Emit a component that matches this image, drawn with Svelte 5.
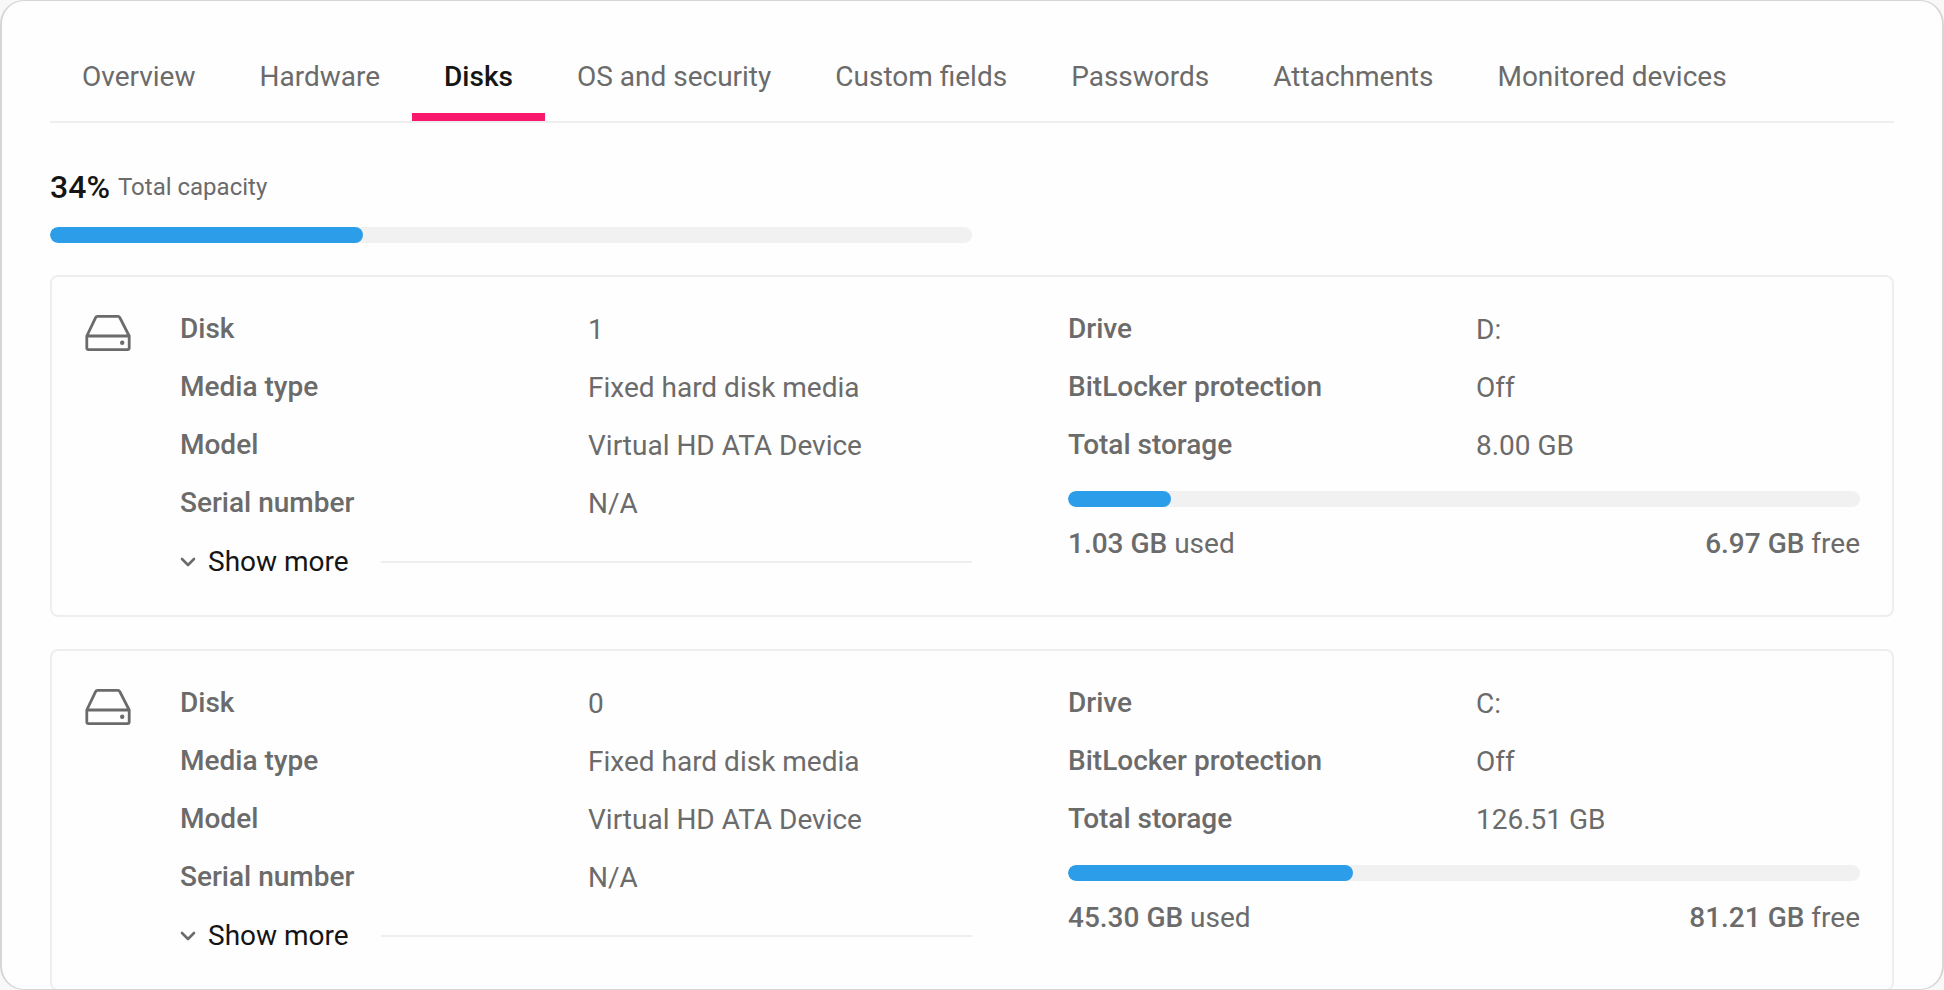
<script>
    let tabs = ['Overview', 'Hardware', 'Disks', 'OS and security', 'Custom fields', 'Passwords', 'Attachments', 'Monitored devices'];
    let activeTab = $state('Disks');

    let totalUsed = 34;

    let disks = [
        {
            left: [
                ['Disk', '1'],
                ['Media type', 'Fixed hard disk media'],
                ['Model', 'Virtual HD ATA Device'],
                ['Serial number', 'N/A']
            ],
            right: [
                ['Drive', 'D:'],
                ['BitLocker protection', 'Off'],
                ['Total storage', '8.00 GB']
            ],
            used: '1.03 GB',
            free: '6.97 GB',
            percent: 13
        },
        {
            left: [
                ['Disk', '0'],
                ['Media type', 'Fixed hard disk media'],
                ['Model', 'Virtual HD ATA Device'],
                ['Serial number', 'N/A']
            ],
            right: [
                ['Drive', 'C:'],
                ['BitLocker protection', 'Off'],
                ['Total storage', '126.51 GB']
            ],
            used: '45.30 GB',
            free: '81.21 GB',
            percent: 36
        }
    ];
</script>

{#snippet bar(percent, label)}
    <div class="bar" role="progressbar" aria-label={label} aria-valuenow={percent} aria-valuemin="0" aria-valuemax="100">
        <div class="bar-fill" style="width: {percent}%"></div>
    </div>
{/snippet}

{#snippet fields(rows)}
    <dl class="fields">
        {#each rows as [name, value]}
            <dt>{name}</dt>
            <dd>{value}</dd>
        {/each}
    </dl>
{/snippet}

<main class="panel">
    <div class="tabs" role="tablist">
        {#each tabs as tab}
            <button
                class="tab"
                class:active={tab === activeTab}
                role="tab"
                aria-selected={tab === activeTab}
                onclick={() => (activeTab = tab)}
            >{tab}</button>
        {/each}
    </div>

    <section class="capacity">
        <div class="capacity-label">
            <strong>{totalUsed}%</strong>
            <span>Total capacity</span>
        </div>
        {@render bar(totalUsed, 'Total capacity')}
    </section>

    <div class="disks">
        {#each disks as disk}
            <article class="disk">
                <svg class="disk-icon" viewBox="0 0 48 48" aria-hidden="true">
                    <path d="M2.8 27 L11.6 8.6 Q12.2 7.4 13.4 7.4 H34 Q35.2 7.4 35.8 8.6 L45.2 27 V38.8 Q45.2 40.6 43.4 40.6 H4.6 Q2.8 40.6 2.8 38.8 Z M2.8 27 H45.2" />
                    <circle cx="38.2" cy="33.7" r="2.2" />
                </svg>

                <div class="details">
                    <div>
                        {@render fields(disk.left)}
                        <div class="more">
                            <button class="more-button">
                                <svg class="chevron" viewBox="0 0 16 16" aria-hidden="true">
                                    <path d="M2 5 L8 11 L14 5" />
                                </svg>
                                Show more
                            </button>
                            <span class="more-line"></span>
                        </div>
                    </div>

                    <div>
                        {@render fields(disk.right)}
                        <div class="storage">
                            {@render bar(disk.percent, 'Used storage')}
                            <div class="storage-text">
                                <span><b>{disk.used}</b> used</span>
                                <span><b>{disk.free}</b> free</span>
                            </div>
                        </div>
                    </div>
                </div>
            </article>
        {/each}
    </div>
</main>

<style>
    :global(body) {
        background: #f8f8f8;
    }

    .panel {
        box-sizing: border-box;
        height: 100vh;
        overflow: hidden;
        padding: 32px 48px 0;
        border: 2px solid #d6d6d6;
        border-width: 1px 2px;
        border-radius: 24px;
        background: #fefefe;
        color: #6b6b6b;
        font-family: Roboto, sans-serif;
        font-size: 28px;
        line-height: 42px;
    }

    button {
        margin: 0;
        border: 0;
        background: none;
        font: inherit;
        cursor: pointer;
    }

    .tabs {
        display: flex;
        border-bottom: 2px solid #eee;
    }

    .tab {
        padding: 23px 32px 15px;
        border-bottom: 8px solid transparent;
        color: #6b6b6b;
        white-space: nowrap;
    }

    .tab.active {
        border-bottom-color: #f9186b;
        color: #151515;
        font-weight: 500;
    }

    .capacity {
        width: 50%;
        margin: 44px 0 32px;
    }

    .capacity-label {
        display: flex;
        align-items: center;
        gap: 8px;
        margin-bottom: 20px;
        font-size: 24px;
        line-height: 40px;
    }

    .capacity-label strong {
        color: #151515;
        font-size: 32px;
        font-weight: 500;
    }

    .bar {
        height: 16px;
        overflow: hidden;
        border-radius: 8px;
        background: #f1f1f1;
    }

    .bar-fill {
        height: 100%;
        border-radius: 8px;
        background: #2b9de9;
    }

    .disks {
        display: flex;
        flex-direction: column;
        gap: 32px;
    }

    .disk {
        display: flex;
        gap: 48px;
        padding: 32px;
        border: 2px solid #eee;
        border-radius: 8px;
    }

    .disk-icon {
        flex: none;
        width: 48px;
        height: 48px;
    }

    .disk-icon path {
        fill: none;
        stroke: #6b6b6b;
        stroke-width: 2.8;
        stroke-linejoin: round;
    }

    .disk-icon circle {
        fill: #6b6b6b;
    }

    .details {
        display: grid;
        flex: 1;
        grid-template-columns: 1fr 1fr;
        gap: 96px;
    }

    .fields {
        display: grid;
        grid-template-columns: 1fr 1fr;
        gap: 16px 24px;
        margin: 0;
    }

    dt,
    b {
        font-weight: 500;
    }

    dt {
        line-height: 40px;
    }

    dd {
        margin: 0;
    }

    .more {
        display: flex;
        align-items: center;
        gap: 32px;
        margin-top: 16px;
    }

    .more-button {
        display: flex;
        align-items: center;
        gap: 12px;
        padding: 0;
        color: #151515;
    }

    .chevron {
        width: 16px;
        height: 16px;
    }

    .chevron path {
        fill: none;
        stroke: #6b6b6b;
        stroke-width: 2.6;
        stroke-linecap: round;
        stroke-linejoin: round;
    }

    .more-line {
        flex: 1;
        height: 2px;
        background: #eee;
    }

    .storage {
        margin-top: 24px;
    }

    .storage-text {
        display: flex;
        justify-content: space-between;
        margin-top: 16px;
    }
</style>
